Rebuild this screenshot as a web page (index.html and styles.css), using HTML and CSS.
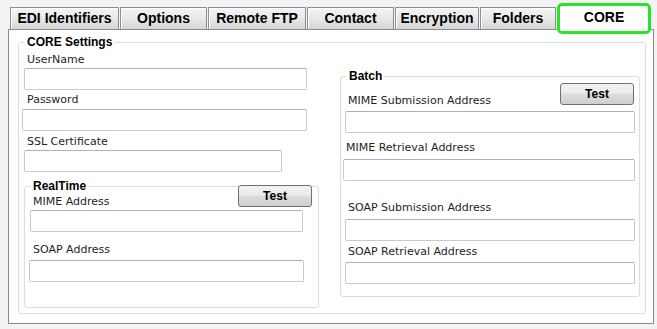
FILE: index.html
```html
<!DOCTYPE html>
<html>
<head>
<meta charset="utf-8">
<title>CORE Settings</title>
<link rel="stylesheet" href="styles.css">
</head>
<body>
<div class="tabs">
  <div class="tab tab-edi">EDI Identifiers</div>
  <div class="tab tab-options">Options</div>
  <div class="tab tab-ftp">Remote FTP</div>
  <div class="tab tab-contact">Contact</div>
  <div class="tab tab-enc">Encryption</div>
  <div class="tab tab-folders">Folders</div>
  <div class="tab tab-core">CORE</div>
</div>
<div class="panel">
  <fieldset class="group core-group">
    <legend class="core-legend">CORE Settings</legend>
    <div class="columns">
      <div class="col-left">
        <label class="lbl user-lbl">UserName</label>
        <input type="text" class="txt user-txt">
        <label class="lbl pass-lbl">Password</label>
        <input type="text" class="txt pass-txt">
        <label class="lbl ssl-lbl">SSL Certificate</label>
        <input type="text" class="txt ssl-txt">

        <fieldset class="group rt-group">
          <legend class="rt-legend">RealTime</legend>
          <div class="btn-row">
            <label class="lbl rt-mime-lbl">MIME Address</label>
            <button class="btn rt-btn">Test</button>
          </div>
          <input type="text" class="txt rt-mime-txt">
          <label class="lbl rt-soap-lbl">SOAP Address</label>
          <input type="text" class="txt rt-soap-txt">
        </fieldset>
      </div>

      <div class="col-right">
        <fieldset class="group batch-group">
          <legend class="batch-legend">Batch</legend>
          <div class="btn-row">
            <label class="lbl b-msub-lbl">MIME Submission Address</label>
            <button class="btn b-btn">Test</button>
          </div>
          <input type="text" class="txt b-msub-txt">
          <label class="lbl b-mret-lbl">MIME Retrieval Address</label>
          <input type="text" class="txt b-mret-txt">
          <label class="lbl b-ssub-lbl">SOAP Submission Address</label>
          <input type="text" class="txt b-ssub-txt">
          <label class="lbl b-sret-lbl">SOAP Retrieval Address</label>
          <input type="text" class="txt b-sret-txt">
        </fieldset>
      </div>
    </div>
  </fieldset>
</div>
</body>
</html>
```
FILE: styles.css
```css
* { box-sizing: border-box; }

body {
  margin: 0;
  background: #f5f2f5;
  font-family: "DejaVu Sans", Verdana, sans-serif;
}

/* ---------- tabs ---------- */
.tabs {
  display: flex;
  gap: 1px;
  margin-top: 7px;
  padding-left: 10px;
  height: 22px;
}

.tab {
  height: 22px;
  border: 1px solid #8e8e8e;
  border-bottom: none;
  background: linear-gradient(#f4f4f4, #e8e8e8 50%, #d6d6d6);
  box-shadow: inset 1px 1px 0 #ffffff;
  font: bold 14px/20px "Liberation Sans", Arial, sans-serif;
  color: #000;
  text-align: center;
  white-space: nowrap;
}

.tab-edi { width: 109px; }
.tab-options { width: 87px; }
.tab-ftp { width: 98px; }
.tab-contact { width: 87px; }
.tab-enc { width: 84px; }
.tab-folders { width: 76px; }

.tab-core {
  position: relative;
  z-index: 1;
  width: 94px;
  height: 31px;
  margin-top: -4px;
  border: 3px solid #27e527;
  border-radius: 5px;
  background: #ffffff;
  box-shadow: none;
  line-height: 20px;
  padding-top: 1px;
}

/* ---------- panel ---------- */
.panel {
  margin-left: 8px;
  width: 646px;
  height: 295px;
  border: 1px solid #8a8a8a;
  background: #ffffff;
  padding: 5px 0 0 9px;
}

.group {
  margin: 0;
  min-width: 0;
  border: 1px solid #d5dfe5;
  border-radius: 3px;
}

.group legend {
  font: bold 12px/14px "Liberation Sans", Arial, sans-serif;
  color: #000;
  padding: 0 2px;
}

.core-group {
  width: 628px;
  padding: 0 5px 5px 3px;
}
.core-legend { margin-left: 3px; }

.columns {
  display: flex;
  gap: 21px;
}

.col-left { width: 297px; }
.col-right { width: 300px; }

/* ---------- labels & inputs ---------- */
.lbl {
  display: block;
  font-size: 11px;
  line-height: 13px;
  color: #1e1e1e;
  white-space: nowrap;
}

.txt {
  display: block;
  height: 22px;
  margin: 0;
  padding: 0 3px;
  border: 1px solid #c7cacf;
  border-top-color: #aeb1b7;
  border-radius: 2px;
  background: #ffffff;
  font: 11px "DejaVu Sans", sans-serif;
}

.user-lbl { margin-top: 4px; padding-left: 5px; }
.user-txt { margin: 2px 0 0 2px; width: 283px; }
.pass-lbl { margin-top: 3px; padding-left: 5px; }
.pass-txt { margin-top: 3px; width: 285px; }
.ssl-lbl { margin-top: 4px; padding-left: 5px; }
.ssl-txt { margin: 2px 0 0 2px; width: 258px; }

/* ---------- RealTime ---------- */
.rt-group {
  margin: 7px 0 0 2px;
  width: 295px;
  padding: 0 6px 25px 5px;
}
.rt-legend { margin-left: 1px; }

.btn-row {
  display: flex;
  justify-content: space-between;
  align-items: flex-start;
}

.rt-mime-lbl { margin-top: 2px; padding-left: 3px; }
.rt-btn { margin-top: -8px; }
.rt-mime-txt { margin-top: 2px; width: 273px; }
.rt-soap-lbl { margin-top: 11px; padding-left: 3px; }
.rt-soap-txt { margin: 4px 0 0 -1px; width: 275px; }

/* ---------- Batch ---------- */
.batch-group {
  margin-top: 20px;
  width: 300px;
  padding: 0 4px 12px 4px;
}
.batch-legend { margin-left: 2px; }

.b-msub-lbl { margin-top: 11px; padding-left: 3px; }
.b-btn { margin-right: 1px; }
.b-msub-txt { margin-top: 4px; width: 290px; }
.b-mret-lbl { margin-top: 8px; padding-left: 1px; }
.b-mret-txt { margin: 5px 0 0 -2px; width: 292px; }
.b-ssub-lbl { margin-top: 20px; padding-left: 3px; }
.b-ssub-txt { margin-top: 5px; width: 290px; }
.b-sret-lbl { margin-top: 4px; padding-left: 3px; }
.b-sret-txt { margin-top: 4px; width: 290px; }

/* ---------- buttons ---------- */
.btn {
  width: 74px;
  height: 22px;
  padding: 0;
  border: 1px solid #707070;
  border-radius: 3px;
  background: linear-gradient(#f2f2f2, #ebebeb 45%, #dddddd 50%, #cfcfcf);
  font: bold 12px/18px "Liberation Sans", Arial, sans-serif;
  color: #000;
  flex: none;
}
```
